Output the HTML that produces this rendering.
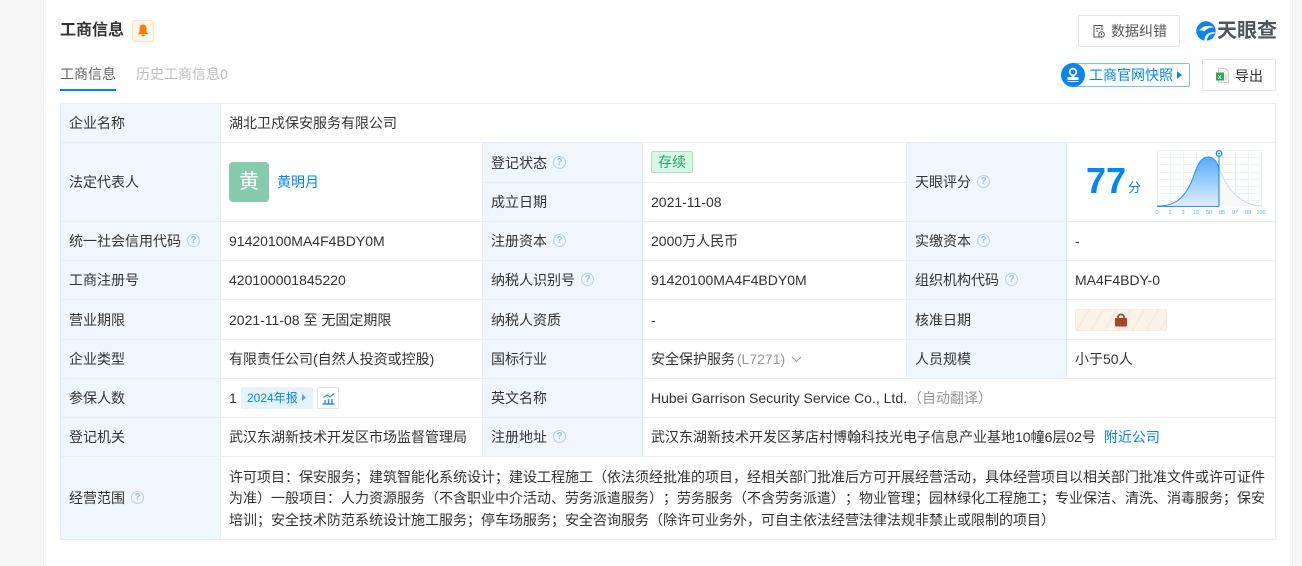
<!DOCTYPE html>
<html><head><meta charset="utf-8"><style>
html,body{margin:0;padding:0;width:1302px;height:566px;overflow:hidden;background:#f5f5f5}
body{font-family:"Liberation Sans","Noto Sans CJK SC",sans-serif;font-size:14px;color:#333;position:relative;text-spacing-trim:space-all;font-feature-settings:"palt" 0}
#card{position:absolute;left:44px;top:0;width:1248px;height:566px;background:#fff;box-shadow:-1px 0 0 #f0f0f0,1px 0 0 #f0f0f0}
.t{position:absolute;white-space:nowrap;line-height:20px}
.b{position:absolute;background:#eff6fd}
.h,.v{position:absolute;background:#e6eef6}
.h{height:1px}.v{width:1px}
.q{position:absolute;width:11px;height:11px;border:1px solid #b7d1ea;border-radius:50%;color:#9fc1e3;font-size:10px;font-weight:700;line-height:11px;text-align:center}
.btn{position:absolute;background:#fff;border:1px solid #e0e4ee;border-radius:2px;box-sizing:border-box}
a{color:#0084ff;text-decoration:none}
svg{position:absolute}
</style></head><body>
<div id="card"></div>

<div class="t" style="left:60px;top:21px;font-size:16px;font-weight:700;color:#333">工商信息</div>
<div style="position:absolute;left:132px;top:20px;width:22px;height:22px;background:#fff4ea;border:1px solid #fde3cc;border-radius:3px;box-sizing:border-box"></div>
<svg style="left:137px;top:24px" width="12" height="13" viewBox="0 0 12 13"><path d="M6 0.500C3.400 0.500 2.500 2.500 2.500 5V8L0.800 10.300H11.200L9.500 8V5C9.500 2.500 8.600 0.500 6 0.500Z M4.200 11H7.800C7.600 12.800 4.400 12.800 4.200 11Z" fill="#ff7a00"/></svg>

<div class="t" style="left:60px;top:64px;color:#666">工商信息</div>
<div class="t" style="left:136px;top:64px;color:#bfbfbf">历史工商信息0</div>
<div style="position:absolute;left:60px;top:89px;width:56px;height:2px;background:#0084ff"></div>

<div class="btn" style="left:1078px;top:15px;width:102px;height:32px"></div>
<svg style="left:1092px;top:24px" width="14" height="15" viewBox="0 0 14 15" fill="none" stroke="#555" stroke-width="1"><path d="M8 13H2V1.500H10V6"/><path d="M4 4.500H8M4 7H6"/><circle cx="9.500" cy="10.500" r="2.800"/><path d="M9.500 9V11"/></svg>
<div class="t" style="left:1111px;top:21px;color:#555">数据纠错</div>

<svg style="left:1195px;top:20px" width="22" height="22" viewBox="0 0 22 22"><circle cx="11" cy="11" r="9.700" fill="#0a84f0"/><path d="M4 10.500C8 5.500 14 4.500 19.500 7.500C15 7 11.500 8.500 9.500 11.500C7.800 10.500 6 10.200 4 10.500Z" fill="#fff"/><path d="M9.500 21C9 16.500 12 13 17 12.300C18.800 12.100 20 12.400 21 13L16.500 14.300C13.500 15.300 12 18 11.800 21Z" fill="#fff"/></svg>
<div class="t" style="left:1217px;top:20px;font-size:20px;font-weight:700;color:#50555c;line-height:22px;width:60px;letter-spacing:0">天眼查</div>

<div style="position:absolute;left:1072px;top:63px;width:118px;height:24px;border:1px solid #7fbcf7;border-radius:2px;box-sizing:border-box"></div>
<svg style="left:1061px;top:63px" width="24" height="24" viewBox="0 0 24 24"><circle cx="12" cy="12" r="12" fill="#0a84f0"/><circle cx="12" cy="9" r="3.300" fill="none" stroke="#fff" stroke-width="1.800"/><path d="M10.500 12V14H6.500V17H17.500V14H13.500V12" fill="#fff"/><path d="M6.500 18.500H17.500" stroke="#fff"/></svg>
<div class="t" style="left:1089px;top:65px;color:#0084ff">工商官网快照</div>
<svg style="left:1177px;top:71px" width="5" height="8"><path d="M0 0L5 4L0 8Z" fill="#0a84f0"/></svg>

<div class="btn" style="left:1202px;top:59px;width:74px;height:32px"></div>
<svg style="left:1215px;top:68px" width="14" height="15" viewBox="0 0 14 15"><path d="M3.500 0.500H10.500L13.500 3.500V14.500H3.500Z" fill="#f5f5f5" stroke="#cfcfcf"/><path d="M9.500 7H12M9.500 9H12M9.500 11H12" stroke="#cfcfcf"/><rect x="1" y="4.500" width="8" height="8" fill="#33a852"/><text x="2.800" y="11" font-size="7" font-weight="700" fill="#fff" font-family="Liberation Sans">x</text></svg>
<div class="t" style="left:1235px;top:66px;color:#333">导出</div>

<!-- label backgrounds -->
<div class="b" style="left:61px;top:104px;width:159px;height:435px"></div>
<div class="b" style="left:483px;top:143px;width:159px;height:274px"></div>
<div class="b" style="left:483px;top:418px;width:159px;height:38px"></div>
<div class="b" style="left:907px;top:143px;width:159px;height:235px"></div>

<!-- lines -->
<div class="h" style="left:60px;top:103px;width:1216px"></div>
<div class="h" style="left:60px;top:142px;width:1216px"></div>
<div class="h" style="left:482px;top:182px;width:424px"></div>
<div class="h" style="left:60px;top:221px;width:1216px"></div>
<div class="h" style="left:60px;top:260px;width:1216px"></div>
<div class="h" style="left:60px;top:299px;width:1216px"></div>
<div class="h" style="left:60px;top:339px;width:1216px"></div>
<div class="h" style="left:60px;top:378px;width:1216px"></div>
<div class="h" style="left:60px;top:417px;width:1216px"></div>
<div class="h" style="left:60px;top:456px;width:1216px"></div>
<div class="h" style="left:60px;top:539px;width:1216px"></div>
<div class="v" style="left:60px;top:103px;height:437px"></div>
<div class="v" style="left:220px;top:103px;height:437px"></div>
<div class="v" style="left:482px;top:142px;height:315px"></div>
<div class="v" style="left:642px;top:142px;height:315px"></div>
<div class="v" style="left:906px;top:142px;height:237px"></div>
<div class="v" style="left:1066px;top:142px;height:237px"></div>
<div class="v" style="left:1275px;top:103px;height:437px"></div>

<!-- row 1 -->
<div class="t" style="left:69px;top:113px">企业名称</div>
<div class="t" style="left:229px;top:113px">湖北卫戍保安服务有限公司</div>

<!-- row 2 -->
<div class="t" style="left:69px;top:172px">法定代表人</div>
<div style="position:absolute;left:229px;top:162px;width:40px;height:40px;background:#86cbae;border-radius:4px;color:#fff;font-size:20px;line-height:41px;text-align:center">黄</div>
<a class="t" style="left:277px;top:172px;color:#0084ff;font-size:14px">黄明月</a>
<div class="t" style="left:491px;top:153px">登记状态</div>
<div class="q" style="left:553px;top:156px">?</div>
<div style="position:absolute;left:651px;top:151px;width:42px;height:22px;background:#d9f7e5;border:1px solid #a3e4bf;border-radius:2px;box-sizing:border-box;color:#2aa866;line-height:20px;text-align:center;font-size:14px">存续</div>
<div class="t" style="left:491px;top:192px">成立日期</div>
<div class="t" style="left:651px;top:192px">2021-11-08</div>
<div class="t" style="left:915px;top:172px">天眼评分</div>
<div class="q" style="left:977px;top:175px">?</div>
<div class="t" style="left:1086px;top:161px;font-size:36px;font-weight:700;color:#0084ff;line-height:40px">77</div>
<div class="t" style="left:1128px;top:178px;font-size:13px;color:#0084ff">分</div>
<svg style="left:1150px;top:145px" width="120" height="72" viewBox="0 0 120 72">
<g stroke="#eef3f8" stroke-width="1" fill="none"><path d="M7 5.500H112M7 12.500H112M7 19.500H112M7 27.500H112M7 34.500H112M7 41.500H112M7 48.500H112M7 55.500H112M7.500 5V61M20.500 5V61M33.500 5V61M46.500 5V61M59.500 5V61M72.500 5V61M85.500 5V61M98.500 5V61M111.500 5V61"/></g>
<defs><linearGradient id="g" x1="0" y1="0" x2="0" y2="1"><stop offset="0" stop-color="#55abfb"/><stop offset="1" stop-color="#e0eefc"/></linearGradient></defs>
<path d="M69 61V23C74 36 80 46 88 52C94 57 103 61 112 61Z" fill="#f9f9f9"/>
<path d="M7 61C14 61 20 60.500 27 56C33 52 37 46 41 38C45 29 48 12 58 12C64 12 67 17 69 23V61Z" fill="url(#g)"/>
<path d="M7 61C14 61 20 60.500 27 56C33 52 37 46 41 38C45 29 48 12 58 12C64 12 67 17 69 23" fill="none" stroke="#2a93f3" stroke-width="1"/>
<path d="M69 23C74 36 80 46 88 52C94 57 103 61 112 61" fill="none" stroke="#c9dcee" stroke-width="1"/>
<path d="M7 61.500H69" stroke="#2a93f3" stroke-width="1"/>
<path d="M69 11V61.500" stroke="#0a84f0" stroke-width="1"/>
<circle cx="69" cy="8.500" r="2.800" fill="#fff" stroke="#0a84f0" stroke-width="1.200"/><circle cx="69" cy="8.500" r="1" fill="#0a84f0"/>
<g font-size="5.500" fill="#5aaaf5" text-anchor="middle" font-family="Liberation Sans"><text x="7" y="69">0</text><text x="20" y="69">1</text><text x="33" y="69">3</text><text x="46" y="69">15</text><text x="59" y="69">50</text><text x="72" y="69">85</text><text x="85" y="69">97</text><text x="98" y="69">99</text><text x="111" y="69">100</text></g>
</svg>

<!-- row 3 -->
<div class="t" style="left:69px;top:231px">统一社会信用代码</div>
<div class="q" style="left:187px;top:234px">?</div>
<div class="t" style="left:229px;top:231px">91420100MA4F4BDY0M</div>
<div class="t" style="left:491px;top:231px">注册资本</div>
<div class="q" style="left:553px;top:234px">?</div>
<div class="t" style="left:651px;top:231px">2000万人民币</div>
<div class="t" style="left:915px;top:231px">实缴资本</div>
<div class="q" style="left:977px;top:234px">?</div>
<div class="t" style="left:1075px;top:231px">-</div>

<!-- row 4 -->
<div class="t" style="left:69px;top:270px">工商注册号</div>
<div class="t" style="left:229px;top:270px">420100001845220</div>
<div class="t" style="left:491px;top:270px">纳税人识别号</div>
<div class="q" style="left:581px;top:273px">?</div>
<div class="t" style="left:651px;top:270px">91420100MA4F4BDY0M</div>
<div class="t" style="left:915px;top:270px">组织机构代码</div>
<div class="q" style="left:1005px;top:273px">?</div>
<div class="t" style="left:1075px;top:270px">MA4F4BDY-0</div>

<!-- row 5 -->
<div class="t" style="left:69px;top:310px">营业期限</div>
<div class="t" style="left:229px;top:310px">2021-11-08 至 无固定期限</div>
<div class="t" style="left:491px;top:310px">纳税人资质</div>
<div class="t" style="left:651px;top:310px">-</div>
<div class="t" style="left:915px;top:310px">核准日期</div>
<div style="position:absolute;left:1075px;top:309px;width:92px;height:22px;border:1px solid #fbeadb;border-radius:2px;box-sizing:border-box;background:repeating-linear-gradient(120deg,#fbf2e9 0,#fbf2e9 10px,#f7ebdf 10px,#f7ebdf 12px)"></div>
<svg style="left:1114px;top:313px" width="14" height="14" viewBox="0 0 14 14"><rect x="1" y="5" width="12" height="8.500" rx="1" fill="#a8442a"/><path d="M4 6V4C4 0.500 10 0.500 10 4V6" fill="none" stroke="#a8442a" stroke-width="1.800"/></svg>

<!-- row 6 -->
<div class="t" style="left:69px;top:349px">企业类型</div>
<div class="t" style="left:229px;top:349px">有限责任公司(自然人投资或控股)</div>
<div class="t" style="left:491px;top:349px">国标行业</div>
<div class="t" style="left:651px;top:349px">安全保护服务 <span style="color:#999;margin-left:-2px">(L7271)</span></div>
<svg style="left:791px;top:356px" width="11" height="7" fill="none" stroke="#999"><path d="M1 1L5.500 5.500L10 1"/></svg>
<div class="t" style="left:915px;top:349px">人员规模</div>
<div class="t" style="left:1075px;top:349px">小于50人</div>

<!-- row 7 -->
<div class="t" style="left:69px;top:388px">参保人数</div>
<div class="t" style="left:229px;top:388px">1</div>
<div style="position:absolute;left:241px;top:387px;width:72px;height:22px;background:#e5f3fe;border-radius:2px"></div>
<div class="t" style="left:247px;top:388px;color:#0084ff;font-size:12px">2024年报</div>
<svg style="left:302px;top:394px" width="4" height="7"><path d="M0 0L4 3.500L0 7Z" fill="#4da3f5"/></svg>
<div class="btn" style="left:317px;top:387px;width:22px;height:22px"></div>
<svg style="left:322px;top:392px" width="13" height="13" viewBox="0 0 13 13" fill="none" stroke="#2a8ff0" stroke-width="1.400"><path d="M0.500 12H12.500M3 12V8M6.500 12V7M10 12V7"/><path d="M1.500 5.500L5 3L8 5L12 1.500" stroke-width="1.200"/></svg>
<div class="t" style="left:491px;top:388px">英文名称</div>
<div class="t" style="left:651px;top:388px">Hubei Garrison Security Service Co., Ltd.<span style="color:#999;margin-left:1px">（自动翻译）</span></div>

<!-- row 8 -->
<div class="t" style="left:69px;top:427px">登记机关</div>
<div class="t" style="left:229px;top:427px">武汉东湖新技术开发区市场监督管理局</div>
<div class="t" style="left:491px;top:427px">注册地址</div>
<div class="q" style="left:553px;top:430px">?</div>
<div class="t" style="left:651px;top:427px">武汉东湖新技术开发区茅店村博翰科技光电子信息产业基地10幢6层02号 <a style="margin-left:4px">附近公司</a></div>

<!-- row 9 -->
<div class="t" style="left:69px;top:488px">经营范围</div>
<div class="q" style="left:131px;top:491px">?</div>
<div class="t" style="left:229px;top:467px">许可项目：保安服务；建筑智能化系统设计；建设工程施工（依法须经批准的项目，经相关部门批准后方可开展经营活动，具体经营项目以相关部门批准文件或许可证件</div>
<div class="t" style="left:229px;top:488px">为准）一般项目：人力资源服务（不含职业中介活动、劳务派遣服务）；劳务服务（不含劳务派遣）；物业管理；园林绿化工程施工；专业保洁、清洗、消毒服务；保安</div>
<div class="t" style="left:229px;top:510px">培训；安全技术防范系统设计施工服务；停车场服务；安全咨询服务（除许可业务外，可自主依法经营法律法规非禁止或限制的项目）</div>
</body></html>
